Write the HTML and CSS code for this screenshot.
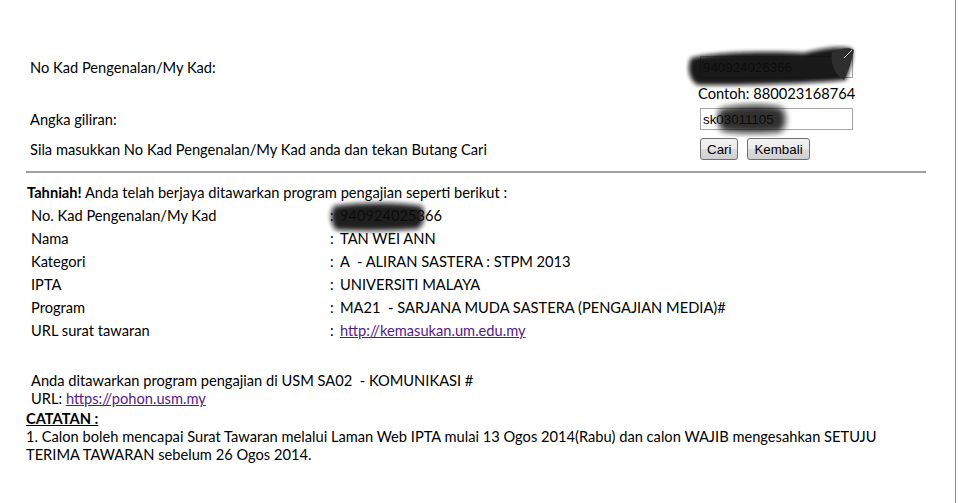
FILE: index.html
```html
<!DOCTYPE html>
<html lang="ms">
<head>
    <meta charset="UTF-8">
    <title>Semakan Keputusan Tawaran</title>
    <link rel="stylesheet" href="styles.css">
</head>
<body>
    <div class="page">
        <form class="search">
            <div class="row row-first">
                <span class="label">No Kad Pengenalan/My Kad:</span>
                <div class="field">
                    <input type="text" class="text-input" value="940924026366">
                    <svg class="scribble scribble-ic" width="176" height="46" viewBox="0 0 176 46">
                        <defs>
                            <filter id="blur1" x="-10%" y="-30%" width="120%" height="160%">
                                <feGaussianBlur stdDeviation="2"/>
                            </filter>
                        </defs>
                        <path d="M5 14 C30 8 80 7 118 9 C138 4 156 2 166 5 C168 14 164 24 160 36 C120 40 60 41 12 41 C2 36 1 22 5 14 Z" fill="#111" opacity="0.95" filter="url(#blur1)"/>
                        <path d="M146 8 C156 4 164 3 168 6 C166 16 162 28 158 36 C148 30 144 18 146 8 Z" fill="#2e2e2e"/>
                        <path d="M158 14 L166 6" stroke="#fff" stroke-width="1" opacity="0.8"/>
                    </svg>
                </div>
            </div>
            <div class="row row-hint">
                <span class="label"></span>
                <span class="hint">Contoh: 880023168764</span>
            </div>
            <div class="row">
                <span class="label">Angka giliran:</span>
                <div class="field">
                    <input type="text" class="text-input" value="sk03011105">
                    <svg class="scribble scribble-roll" width="90" height="36" viewBox="0 0 90 36">
                        <defs>
                            <filter id="blur2" x="-20%" y="-30%" width="140%" height="160%">
                                <feGaussianBlur stdDeviation="3"/>
                            </filter>
                        </defs>
                        <path d="M12 8 C32 3 60 3 74 7 C80 16 78 27 72 31 C48 33 26 32 14 30 C9 22 9 14 12 8 Z" fill="#111" opacity="0.85" filter="url(#blur2)"/>
                    </svg>
                </div>
            </div>
            <div class="row">
                <span class="label">Sila masukkan No Kad Pengenalan/My Kad anda dan tekan Butang Cari</span>
                <div class="actions">
                    <button type="button" class="btn">Cari</button>
                    <button type="button" class="btn">Kembali</button>
                </div>
            </div>
        </form>

        <hr class="divider">

        <div class="result">
            <p class="intro"><b>Tahniah!</b> Anda telah berjaya ditawarkan program pengajian seperti berikut :</p>
            <div class="details">
                <span>No. Kad Pengenalan/My Kad</span>
                <span class="value">
                    <span class="colon">:</span>940924025366
                    <svg class="scribble scribble-detail" width="116" height="42" viewBox="0 0 116 42">
                        <defs>
                            <filter id="blur3" x="-20%" y="-30%" width="140%" height="160%">
                                <feGaussianBlur stdDeviation="2.4"/>
                            </filter>
                        </defs>
                        <path d="M12 9 C40 5 74 5 100 9 C104 18 102 28 96 32 C68 34 40 34 14 33 C8 26 8 16 12 9 Z" fill="#111" opacity="0.92" filter="url(#blur3)"/>
                    </svg>
                </span>

                <span>Nama</span>
                <span class="value"><span class="colon">:</span>TAN WEI ANN</span>

                <span>Kategori</span>
                <span class="value"><span class="colon">:</span>A&nbsp; - ALIRAN SASTERA : STPM 2013</span>

                <span>IPTA</span>
                <span class="value"><span class="colon">:</span>UNIVERSITI MALAYA</span>

                <span>Program</span>
                <span class="value"><span class="colon">:</span>MA21&nbsp; - SARJANA MUDA SASTERA (PENGAJIAN MEDIA)#</span>

                <span>URL surat tawaran</span>
                <span class="value"><span class="colon">:</span><a href="#" class="link">http://kemasukan.um.edu.my</a></span>
            </div>

            <div class="other-offer">
                <p>Anda ditawarkan program pengajian di USM SA02&nbsp; - KOMUNIKASI #</p>
                <p>URL: <a href="#" class="link">https://pohon.usm.my</a></p>
            </div>

            <div class="notes">
                <p class="notes-title">CATATAN :</p>
                <p>1. Calon boleh mencapai Surat Tawaran melalui Laman Web IPTA mulai 13 Ogos 2014(Rabu) dan calon WAJIB mengesahkan SETUJU TERIMA TAWARAN sebelum 26 Ogos 2014.</p>
            </div>
        </div>
    </div>
</body>
</html>
```

FILE: styles.css
```css
body {
    margin: 0;
    background: #ffffff;
    font-family: Lato, "Open Sans", sans-serif;
    font-size: 14.67px;
    color: #000;
}
.page {
    width: 956px;
    min-height: 503px;
    border-right: 1px solid #8c8c8c;
    box-sizing: border-box;
    padding: 52px 0 0 26px;
}
.search {
    width: 900px;
}
.row {
    display: grid;
    grid-template-columns: 670px 1fr;
    align-items: center;
    padding-left: 4px;
    height: 30px;
}
.row-hint {
    height: 22px;
}
.hint {
    margin-left: -2px;
}
.field {
    position: relative;
    display: flex;
}
.text-input {
    width: 153px;
    height: 22px;
    box-sizing: border-box;
    border: 1px solid #a5a5a5;
    padding: 1px 2px;
    font-family: "Liberation Sans", Arial, sans-serif;
    font-size: 13.33px;
    color: #000;
    outline: none;
}
.actions {
    display: flex;
    gap: 9px;
}
.btn {
    height: 22px;
    padding: 0 6px;
    border: 1px solid #707070;
    border-radius: 3px;
    background: linear-gradient(#f2f2f2 0%, #ebebeb 50%, #dddddd 51%, #cfcfcf 100%);
    font-family: "Liberation Sans", Arial, sans-serif;
    font-size: 13.33px;
    color: #000;
    cursor: pointer;
}
.scribble {
    position: absolute;
    pointer-events: none;
}
.scribble-ic {
    left: -14px;
    top: -12px;
}
.scribble-roll {
    left: 8px;
    top: -7px;
}
.scribble-detail {
    left: -8px;
    top: -10px;
}
.divider {
    width: 900px;
    margin: 7px 0 0 0;
    border: none;
    border-top: 2px solid #a0a0a0;
}
.result {
    width: 900px;
    padding-top: 10px;
}
.result p {
    margin: 0;
}
.intro {
    line-height: 20px;
    padding-left: 1px;
}
.details {
    display: grid;
    grid-template-columns: 299px 1fr;
    grid-auto-rows: 23px;
    align-items: center;
    padding-left: 5px;
    margin-top: 1px;
}
.value {
    position: relative;
}
.colon {
    display: inline-block;
    width: 10px;
}
.link {
    color: #551a8b;
}
.other-offer {
    padding: 30px 0 0 5px;
    line-height: 18px;
}
.notes {
    padding-top: 2px;
    line-height: 18px;
}
.notes-title {
    font-weight: bold;
    text-decoration: underline;
}
```
